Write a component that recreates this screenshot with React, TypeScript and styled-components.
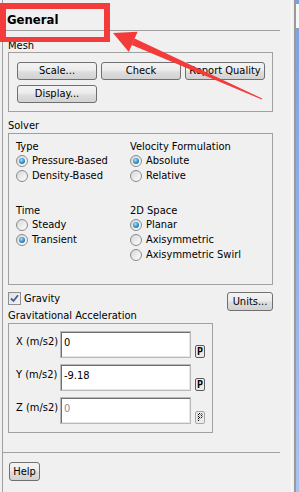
import React from "react";
import styled, { createGlobalStyle, css } from "styled-components";

const FONT = `"DejaVu Sans Condensed", "DejaVu Sans", sans-serif`;

const Global = createGlobalStyle`
  html, body { margin: 0; padding: 0; background: #f0f0f0; }
  body { font-family: ${FONT}; font-stretch: condensed; font-size: 11px; color: #000; }
  * { box-sizing: border-box; }
`;

const Root = styled.div`
  position: relative;
  display: flex;
  width: 299px;
  height: 492px;
  overflow: hidden;
  background: #f0f0f0;
`;

const Panel = styled.div`
  margin-left: 2px;
  width: 278px;
  border-left: 1px solid #a0a0a0;
  display: flex;
  flex-direction: column;
`;

const TitleBar = styled.div`
  height: 31px;
  padding: 12px 0 0 4px;
  border-bottom: 1px solid #a0a0a0;
  font-size: 13px;
  line-height: 16px;
  font-weight: bold;
`;

const Content = styled.div`
  flex: 1;
  padding: 0 7px 0 5px;
  display: flex;
  flex-direction: column;
`;

const SectionLabel = styled.div<{ $top?: number; $bottom?: number }>`
  height: 13px;
  line-height: 13px;
  margin-top: ${(p) => p.$top ?? 0}px;
  margin-bottom: ${(p) => p.$bottom ?? 1}px;
  white-space: nowrap;
`;

const GroupBox = styled.div<{ $width?: number; $pad: string }>`
  width: ${(p) => p.$width ?? 265}px;
  border: 1px solid #a0a0a0;
  padding: ${(p) => p.$pad};
`;

const ButtonGrid = styled.div`
  display: grid;
  grid-template-columns: repeat(3, 80px);
  column-gap: 4px;
  row-gap: 5px;
`;

const Button = styled.button<{ $w?: number; $h?: number }>`
  width: ${(p) => (p.$w ? `${p.$w}px` : "auto")};
  height: ${(p) => p.$h ?? 18}px;
  padding: 0;
  border: 1px solid #707070;
  border-radius: 3px;
  background: linear-gradient(#f3f3f3 0%, #ececec 45%, #dedede 55%, #d2d2d2 100%);
  font-family: ${FONT};
  font-stretch: condensed;
  font-size: 11px;
  line-height: 14px;
  color: #000;
  white-space: nowrap;
  text-align: center;
`;

const SolverGrid = styled.div`
  display: grid;
  grid-template-columns: 114px 1fr;
  row-gap: 21px;
`;

const OptionGroup = styled.div`
  display: flex;
  flex-direction: column;
`;

const GroupTitle = styled.div`
  height: 13px;
  line-height: 13px;
  white-space: nowrap;
`;

const RadioRow = styled.div`
  height: 15px;
  display: flex;
  align-items: center;
  gap: 4px;
  white-space: nowrap;
`;

const RadioCircle = styled.span<{ $checked?: boolean }>`
  position: relative;
  width: 12px;
  height: 12px;
  border-radius: 50%;
  border: 1px solid #8a8a8a;
  background: linear-gradient(135deg, #d6d6d6 0%, #efefef 60%, #fdfdfd 100%);
  flex: none;
  ${(p) =>
    p.$checked &&
    css`
      &::after {
        content: "";
        position: absolute;
        left: 2px;
        top: 2px;
        width: 6px;
        height: 6px;
        border-radius: 50%;
        background: radial-gradient(circle at 40% 35%, #a8e2fb 0%, #3d9ad6 45%, #0f4f86 100%);
      }
    `}
`;

const GravityRow = styled.div`
  margin-top: 7px;
  height: 17px;
  display: flex;
  justify-content: space-between;
  align-items: flex-start;
`;

const CheckLabel = styled.label`
  display: flex;
  align-items: center;
  gap: 3px;
  height: 13px;
  line-height: 13px;
`;

const CheckBox = styled.span`
  width: 13px;
  height: 13px;
  border: 1px solid #8f8f8f;
  background: linear-gradient(135deg, #dfe3ea 0%, #f2f3f6 100%);
  display: flex;
  align-items: center;
  justify-content: center;
  flex: none;
`;

const FormRows = styled.div`
  display: flex;
  flex-direction: column;
  gap: 6px;
`;

const FormRow = styled.div`
  display: flex;
  align-items: flex-start;
`;

const RowLabel = styled.div`
  width: 44px;
  padding-top: 4px;
  line-height: 13px;
  white-space: nowrap;
`;

const TextField = styled.div<{ $disabled?: boolean }>`
  width: 131px;
  height: 27px;
  border: 1px solid #b9b9b9;
  box-shadow: inset 1px 1px 0 #6e6e6e, inset -1px -1px 0 #e6e6e6;
  background: #fff;
  padding: 4px 0 0 3px;
  line-height: 13px;
  font-size: 11px;
  color: ${(p) => (p.$disabled ? "#8d8d8d" : "#000")};
`;

const PButton = styled.div<{ $disabled?: boolean }>`
  margin: 14px 0 0 4px;
  width: 10px;
  height: 13px;
  border: 1px solid ${(p) => (p.$disabled ? "#a8a8a8" : "#5c5c5c")};
  border-radius: 2px;
  background: #ececec;
  font-family: "DejaVu Sans Mono", monospace;
  font-size: 10px;
  line-height: 11px;
  text-align: center;
  font-weight: bold;
  ${(p) =>
    p.$disabled
      ? css`
          & > span {
            color: transparent;
            background: repeating-conic-gradient(#000 0 25%, transparent 0 50%) 0 0 / 2px 2px;
            -webkit-background-clip: text;
            background-clip: text;
          }
        `
      : css`
          color: #000;
        `}
`;

const Footer = styled.div`
  height: 40px;
  border-top: 1px solid #a0a0a0;
  padding: 9px 0 0 6px;
`;

const RightStrip = styled.div`
  width: 19px;
  display: flex;
  padding-left: 11px;
`;

const StripLight = styled.div`
  width: 1px;
  background: #fbfbfb;
  margin-right: 2px;
`;

const StripDark = styled.div`
  width: 2px;
  background: #9a9a9a;
`;

const StripBlue = styled.div`
  width: 3px;
  display: flex;
  flex-direction: column;
  background: linear-gradient(#7e9fe2 0%, #8eaee8 40%, #a9c4ef 100%);
`;

const StripCap = styled.div`
  height: 26px;
  margin-top: 3px;
  background: #f7f7f7;
  border-top: 1px solid #9a9a9a;
  border-bottom: 1px solid #9a9a9a;
`;

const RedBox = styled.div`
  position: absolute;
  left: 0;
  top: 3px;
  width: 110px;
  height: 39px;
  border: 6px solid #f33b3b;
  border-bottom-width: 5px;
  pointer-events: none;
`;

const ArrowLayer = styled.svg`
  position: absolute;
  left: 0;
  top: 0;
  pointer-events: none;
`;

function Radio({ checked, label }: { checked?: boolean; label: string }) {
  return (
    <RadioRow>
      <RadioCircle $checked={checked} />
      <span>{label}</span>
    </RadioRow>
  );
}

export default function App() {
  return (
    <>
      <Global />
      <Root>
        <Panel>
          <TitleBar>General</TitleBar>
          <Content>
            <SectionLabel $top={8} $bottom={0}>Mesh</SectionLabel>
            <GroupBox $pad="9px 7px 8px 8px">
              <ButtonGrid>
                <Button>Scale...</Button>
                <Button>Check</Button>
                <Button>Report Quality</Button>
                <Button>Display...</Button>
              </ButtonGrid>
            </GroupBox>

            <SectionLabel $top={7}>Solver</SectionLabel>
            <GroupBox $pad="6px 7px 22px 7px">
              <SolverGrid>
                <OptionGroup>
                  <GroupTitle>Type</GroupTitle>
                  <Radio checked label="Pressure-Based" />
                  <Radio label="Density-Based" />
                </OptionGroup>
                <OptionGroup>
                  <GroupTitle>Velocity Formulation</GroupTitle>
                  <Radio checked label="Absolute" />
                  <Radio label="Relative" />
                </OptionGroup>
                <OptionGroup>
                  <GroupTitle>Time</GroupTitle>
                  <Radio label="Steady" />
                  <Radio checked label="Transient" />
                </OptionGroup>
                <OptionGroup>
                  <GroupTitle>2D Space</GroupTitle>
                  <Radio checked label="Planar" />
                  <Radio label="Axisymmetric" />
                  <Radio label="Axisymmetric Swirl" />
                </OptionGroup>
              </SolverGrid>
            </GroupBox>

            <GravityRow>
              <CheckLabel>
                <CheckBox>
                  <svg width="9" height="9" viewBox="0 0 9 9">
                    <path d="M1 4.5 L3.5 7 L8 1.2" fill="none" stroke="#4a5d8f" strokeWidth="1.8" />
                  </svg>
                </CheckBox>
                <span>Gravity</span>
              </CheckLabel>
              <Button $w={46} $h={19}>Units...</Button>
            </GravityRow>

            <SectionLabel>Gravitational Acceleration</SectionLabel>
            <GroupBox $width={205} $pad="7px 7px 8px 7px">
              <FormRows>
                <FormRow>
                  <RowLabel>X (m/s2)</RowLabel>
                  <TextField>0</TextField>
                  <PButton><span>P</span></PButton>
                </FormRow>
                <FormRow>
                  <RowLabel>Y (m/s2)</RowLabel>
                  <TextField>-9.18</TextField>
                  <PButton><span>P</span></PButton>
                </FormRow>
                <FormRow>
                  <RowLabel>Z (m/s2)</RowLabel>
                  <TextField $disabled>0</TextField>
                  <PButton $disabled><span>P</span></PButton>
                </FormRow>
              </FormRows>
            </GroupBox>
          </Content>
          <Footer>
            <Button $w={31} $h={19}>Help</Button>
          </Footer>
        </Panel>
        <RightStrip>
          <StripLight />
          <StripDark />
          <StripBlue>
            <StripCap />
          </StripBlue>
        </RightStrip>

        <RedBox />
        <ArrowLayer width="299" height="492" viewBox="0 0 299 492">
          <polygon points="113,33 137.6,31.7 128.8,51.9" fill="#f33b3b" />
          <polygon points="134.6,38.6 262.2,98.5 261.8,99.5 131.8,45" fill="#f33b3b" />
        </ArrowLayer>
      </Root>
    </>
  );
}
